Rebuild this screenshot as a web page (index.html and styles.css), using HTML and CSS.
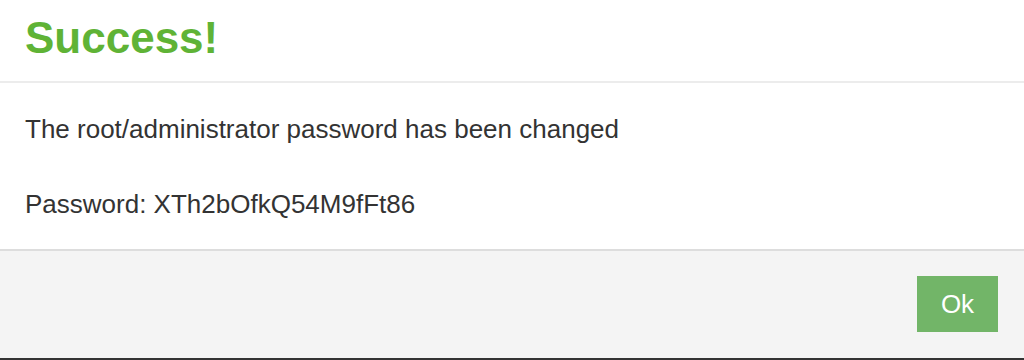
FILE: index.html
```html
<!DOCTYPE html>
<html>
<head>
<meta charset="utf-8">
<link rel="stylesheet" href="styles.css">
</head>
<body>
<div class="modal">
  <div class="modal-header">
    <h1 class="title">Success!</h1>
  </div>
  <div class="modal-body">
    <p class="msg">The root/administrator password has been changed</p>
    <p class="msg">Password: XTh2bOfkQ54M9fFt86</p>
  </div>
  <div class="modal-footer">
    <button class="btn-ok">Ok</button>
  </div>
</div>
</body>
</html>
```
FILE: styles.css
```css
html, body {
  margin: 0;
  padding: 0;
  background: #ffffff;
}
body {
  font-family: "Liberation Sans", Arial, sans-serif;
  color: #333333;
}
.modal {
  width: 1024px;
  height: 360px;
  display: flex;
  flex-direction: column;
  box-sizing: border-box;
  border-bottom: 2px solid #333333;
}
.modal-header {
  height: 83px;
  box-sizing: border-box;
  border-bottom: 2px solid #ececec;
  padding: 0 25px 6px;
  display: flex;
  align-items: center;
}
.title {
  margin: 0;
  font-size: 44px;
  font-weight: bold;
  color: #5fb336;
  line-height: 1;
}
.modal-body {
  height: 168px;
  box-sizing: border-box;
  padding: 9px 25px 0;
  border-bottom: 2px solid #dddddd;
}
.msg {
  margin: 0;
  font-size: 26px;
  line-height: 75px;
}
.modal-footer {
  flex: 1;
  background: #f4f4f4;
  display: flex;
  justify-content: flex-end;
  align-items: flex-start;
  padding: 25px 26px 0 0;
}
.btn-ok {
  width: 81px;
  height: 56px;
  border: none;
  background: #72b568;
  color: #ffffff;
  font-family: "Liberation Sans", Arial, sans-serif;
  font-size: 26px;
  padding: 0;
}
```
